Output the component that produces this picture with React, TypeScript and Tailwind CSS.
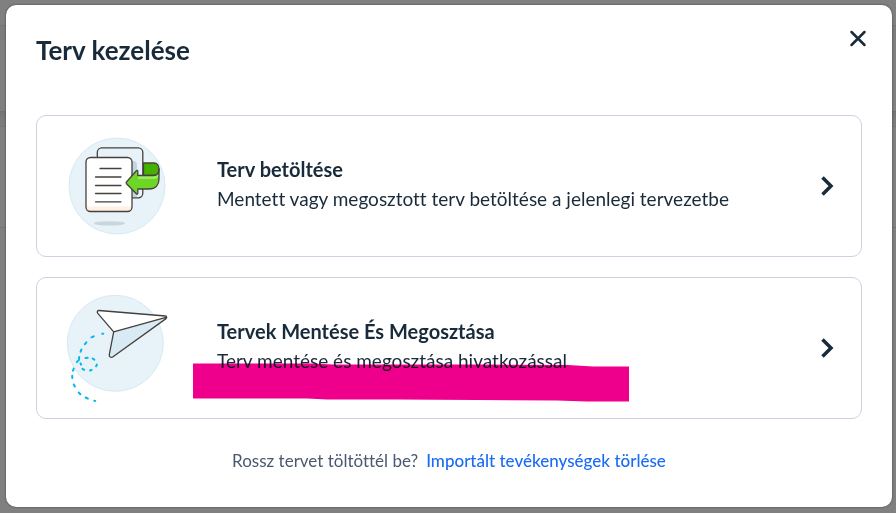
import React from "react";

function LoadPlanIcon() {
    return (
        <svg viewBox="0 1 120 120" className="size-[120px] shrink-0" fill="none" strokeLinecap="round" strokeLinejoin="round" aria-hidden="true">
            <circle cx="61" cy="61" r="48" fill="#e7f2f9" stroke="#d8eaf4" />
            <ellipse cx="53.5" cy="98.4" rx="15.5" ry="2.2" fill="#c9d6de" />
            {/* Back page */}
            <rect x="41.3" y="22.8" width="45.5" height="50" rx="4.5" fill="#e7f2f9" />
            <path d="M75 36h2.5a3.5 3.5 0 0 1 3.5 3.5V72h-6z" fill="#bfd5e3" />
            <path d="M41.3 32v-4.7a4.5 4.5 0 0 1 4.5-4.5h36.5a4.5 4.5 0 0 1 4.5 4.5v41a4.5 4.5 0 0 1-4.5 4.5H76" stroke="#45413c" strokeWidth="1.3" />
            {/* Front page */}
            <rect x="30" y="32.5" width="46" height="54" rx="4.5" fill="#fff" />
            <path d="M30 81.5h46a5 5 0 0 1-4.5 5h-37a5 5 0 0 1-4.5-5z" fill="#fff0e3" />
            <rect x="30" y="32.5" width="46" height="54" rx="4.5" stroke="#45413c" strokeWidth="1.3" />
            <path d="M44 43.5h21M39.5 52H65M39.5 60.5H65M39.5 68.5H65M39.5 76.8H65" stroke="#45413c" strokeWidth="1.3" />
            {/* Arrow */}
            <path d="M87.5 38H98c3 0 5 2.5 5 6 0 4-2 6.5-5 6.5H87.5z" fill="#46b000" stroke="#45413c" strokeWidth="1.3" />
            <path d="M81 45.5 70 58l11 11.5V64h12c6.5 0 10-4 10-10V44c0 4-2 6.5-5.5 6.5H82z" fill="#6dd627" />
            <path d="M82 51h15.500c3.5 0 5.5-3 5.5-6v4c0 3-2 5-5.5 5H82z" fill="#9ceb60" />
            <path d="M81.8 50.5v-4.3c0-.8-.9-1.1-1.4-.5L70.500 57c-.5.6-.5 1.200 0 1.800l9.900 10c.5.6 1.4.3 1.4-.5V64H93c6.5 0 10-4 10-10V44c0 4-2 6.5-5.5 6.5z" stroke="#45413c" strokeWidth="1.3" />
        </svg>
    );
}

function SharePlanIcon() {
    return (
        <svg viewBox="0 3 120 120" className="size-[120px] shrink-0" fill="none" strokeLinecap="round" strokeLinejoin="round" aria-hidden="true">
            <circle cx="59.3" cy="58.3" r="48" fill="#e7f2f9" stroke="#d8eaf4" />
            {/* Paper plane */}
            <path d="M43 25.5 109.5 31c1 .1 1.2.8.3 1.2L57.7 46.8 41.8 28.3c-1-1.2-.5-2.9 1.2-2.8z" fill="#fff" />
            <path d="M57.7 46.8 110 32.5 57 71.5c-2 1.5-4 .3-3.7-2z" fill="#d8eaf4" />
            <path d="M43 25.5 109.5 31c1.4.1 1.5 1.8.5 2.6L57 71.7c-2 1.5-4 .2-3.7-2.2l4.4-22.7L41.8 28.3c-1-1.2-.5-2.9 1.2-2.8zM57.7 46.8 110 32.3" stroke="#45413c" strokeWidth="1.3" />
            {/* Flight trail */}
            <g stroke="#00b8f0" strokeWidth="2">
                <path d="M46.3 48.8l1-.1M35.5 52.3l2.2-1M28.9 59.2l1.5-1.9M24.6 66.7l.8-2.2M23 74.2l.2-2.2M20.8 77.1l2-2M17 85.8l.7-2.2M16.300 93l-.1-2.2M18.9 101.5l-1.1-2M24.4 109.2l-1.7-1.7M31.9 113.6l-2.2-1.1M39.3 115.9l-1-.2" />
                <path d="M29.5 72.9l2.2-.1M36.6 73.5l1.7 1.1M40.9 79.6l-.8 1.7M35.6 84.8l-1.5.7M28.2 84.8l-1.7-1M25.100 79.7l-.6-1.4" />
            </g>
        </svg>
    );
}

function ChevronIcon() {
    return (
        <svg viewBox="0 0 16 24" className="h-6 w-4 shrink-0" fill="none" stroke="#192b3a" strokeWidth="3.5" aria-hidden="true">
            <path d="M3.5 3.5 12 12l-8.5 8.5" />
        </svg>
    );
}

interface OptionCardProps {
    icon: React.ReactNode;
    title: string;
    description: string;
    marked?: boolean;
}

function OptionCard({ icon, title, description, marked }: OptionCardProps) {
    return (
        <button type="button" className="flex min-h-[142px] w-full items-center rounded-[10px] border border-[#cbd3df] bg-white pr-[26px] pl-[19px] text-left">
            {icon}
            <span className="relative ml-[41px] flex-1 pb-1 leading-[30px]">
                <span className="block text-[20px] font-bold">{title}</span>
                <span className="block text-[19px]">{description}</span>
                {marked && (
                    <svg viewBox="0 0 436 40" preserveAspectRatio="none" className="absolute top-[47px] -left-6 h-10 w-[436px] mix-blend-multiply" aria-hidden="true">
                        <path d="M0 .5h120l20 1h150l85 .5 25 1.500h36v35h-42l-30-1-80-.5-80-.5h-70l-20-1H0z" fill="#ee008c" />
                    </svg>
                )}
            </span>
            <ChevronIcon />
        </button>
    );
}

export default function App() {
    return (
        <div className="min-h-screen bg-[linear-gradient(#808080_25px,#747474_25px,#747474_26px,#7c7c7c_26px,#7c7c7c_40px,#808080_40px,#808080_111px,#6e6e6e_111px,#767676_113px,#7d7d7d_126px,#747474_126px,#747474_127px,#808080_127px,#808080_227px,#747474_227px,#747474_228px,#808080_228px)] pt-[5px] pr-1 pb-1.5 pl-1.5 font-[Lato,sans-serif] text-[#192b3a] [font-variant-ligatures:none]">
            <div role="dialog" aria-labelledby="dialog-title" className="rounded-[10px] bg-white px-[30px] pb-8 shadow-[0_0_2px_#333]">
                {/* Header */}
                <div className="flex h-[110px] items-start justify-between pt-[26px]">
                    <h2 id="dialog-title" className="text-[26px] leading-[38px] font-bold">Terv kezelése</h2>
                    <button type="button" aria-label="Bezárás" className="-mt-1 -mr-2">
                        <svg viewBox="0 0 24 24" className="size-6" fill="none" stroke="#192b3a" strokeWidth="2.5" strokeLinecap="round">
                            <path d="M5.5 5l13 13M18.5 5l-13 13" />
                        </svg>
                    </button>
                </div>

                {/* Options */}
                <div className="flex flex-col gap-5">
                    <OptionCard
                        icon={<LoadPlanIcon />}
                        title="Terv betöltése"
                        description="Mentett vagy megosztott terv betöltése a jelenlegi tervezetbe"
                    />
                    <OptionCard
                        icon={<SharePlanIcon />}
                        title="Tervek Mentése És Megosztása"
                        description="Terv mentése és megosztása hivatkozással"
                        marked
                    />
                </div>

                {/* Footer */}
                <p className="flex items-center justify-center gap-2 pt-7 text-[17px] leading-7 text-[#4a5872]">
                    Rossz tervet töltöttél be?
                    <a href="#" className="font-medium text-[#1a6cf5]">Importált tevékenységek törlése</a>
                </p>
            </div>
        </div>
    );
}
